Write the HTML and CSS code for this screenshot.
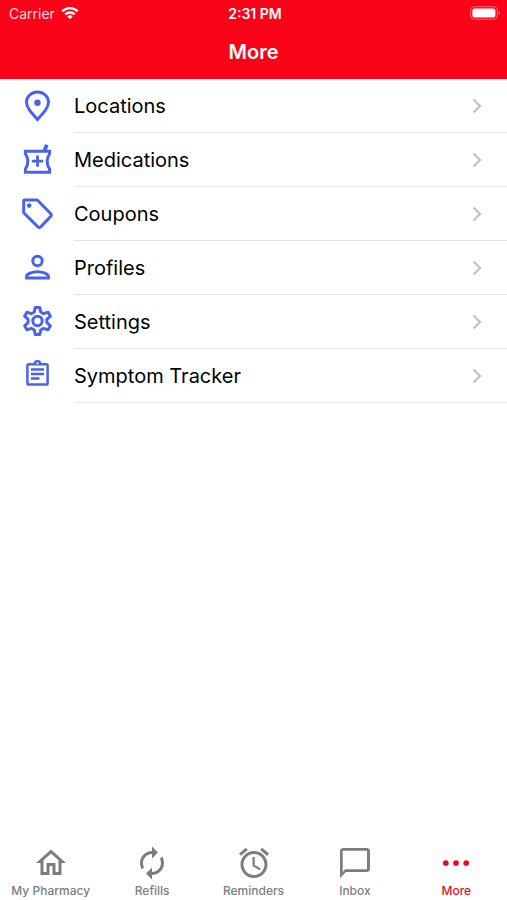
FILE: index.html
```html
<!DOCTYPE html>
<html lang="en">

<head>
    <title>More</title>
    <meta charset="utf-8">
    <meta name="viewport" content="width=device-width, initial-scale=1">
    <link rel="stylesheet" href="styles.css">
</head>

<body>
    <header class="header">
        <div class="status-bar">
            <div class="carrier">
                <span>Carrier</span>
                <svg width="18" height="14" viewBox="0 0 20 14" fill="none" stroke="currentColor" stroke-width="2.6">
                    <path d="M1.4 5.2a12 12 0 0 1 17.2 0M4.7 8.6a7.6 7.6 0 0 1 10.6 0"/>
                    <path d="M10 14l-3-3a4.3 4.3 0 0 1 6 0z" fill="currentColor" stroke="none"/>
                </svg>
            </div>
            <div class="time">2:31 PM</div>
            <div class="battery">
                <svg width="31" height="14" viewBox="0 0 31 14">
                    <rect x="0.7" y="0.7" width="26.6" height="12.6" rx="3.6" fill="none" stroke="#fff" stroke-opacity="0.4"/>
                    <rect x="2.4" y="2.4" width="23" height="9.2" rx="2" fill="#fff"/>
                    <path d="M28.7 4.8c1.8.7 1.8 3.7 0 4.4z" fill="#fff" fill-opacity="0.5"/>
                </svg>
            </div>
        </div>
        <h1 class="title">More</h1>
    </header>

    <main class="content">
        <ul class="menu">
            <li>
                <a class="menu-item" href="#locations">
                    <svg class="menu-icon" viewBox="0 0 36 36">
                        <path d="M18.5 31.5C12 24.5 7.5 19.5 7.5 14.3a11 10.3 0 0 1 22 0c0 5.200-4.500 10.200-11 17.200z" fill="none" stroke="currentColor" stroke-width="3"/>
                        <circle cx="18.5" cy="14.8" r="3.2" fill="currentColor"/>
                    </svg>
                    <span class="menu-label">Locations
                        <svg class="chevron" viewBox="0 0 10 16"><path d="M1.500 1.500L8 8l-6.500 6.500"/></svg>
                    </span>
                </a>
            </li>
            <li>
                <a class="menu-item" href="#medications">
                    <svg class="menu-icon" viewBox="0 0 36 36" fill="none" stroke="currentColor" stroke-width="3">
                        <path d="M6.400 9.200h24.200v2.600q-5 7.600 0 15.200v3.200H6.400V27q5-7.600 0-15.200z"/>
                        <path d="M18.500 13.400v11.400M12.800 19.100h11.400" stroke-width="2.800"/>
                        <path d="M25.400 9l2.400-6.200" stroke-width="3.800"/>
                    </svg>
                    <span class="menu-label">Medications
                        <svg class="chevron" viewBox="0 0 10 16"><path d="M1.500 1.500L8 8l-6.500 6.500"/></svg>
                    </span>
                </a>
            </li>
            <li>
                <a class="menu-item" href="#coupons">
                    <svg class="menu-icon" viewBox="0 0 36 36">
                        <path d="M6 4h12.300L31.600 17.500q1.300 1.500 0 3L21.700 30.900q-1.400 1.300-2.800 0L4.700 16.800V5.300Q4.700 4 6 4z" fill="none" stroke="currentColor" stroke-width="3" stroke-linejoin="round"/>
                        <circle cx="10.200" cy="9.600" r="2.300" fill="currentColor"/>
                    </svg>
                    <span class="menu-label">Coupons
                        <svg class="chevron" viewBox="0 0 10 16"><path d="M1.500 1.500L8 8l-6.500 6.500"/></svg>
                    </span>
                </a>
            </li>
            <li>
                <a class="menu-item" href="#profiles">
                    <svg class="menu-icon" viewBox="0 0 36 36" fill="none" stroke="currentColor" stroke-width="3">
                        <circle cx="18.500" cy="11" r="4.700"/>
                        <path d="M7.600 28.100v-1.500c0-2.600 5.600-4.800 10.900-4.800s10.900 2.200 10.900 4.800v1.500z"/>
                    </svg>
                    <span class="menu-label">Profiles
                        <svg class="chevron" viewBox="0 0 10 16"><path d="M1.500 1.500L8 8l-6.500 6.500"/></svg>
                    </span>
                </a>
            </li>
            <li>
                <a class="menu-item" href="#settings">
                    <svg class="menu-icon" viewBox="0 0 36 36" fill="none" stroke="currentColor" stroke-width="3" stroke-linejoin="round">
                        <path d="M16.200 3.500h4.600l.9 4.500 3 1.700 4.400-1.500 2.300 4-3.500 3.100v3.400l3.500 3.100-2.300 4-4.400-1.500-3 1.700-.9 4.500h-4.600l-.9-4.500-3-1.700-4.400 1.500-2.300-4 3.500-3.100v-3.400l-3.500-3.100 2.300-4 4.400 1.500 3-1.700z"/>
                        <circle cx="18.500" cy="17" r="4.700"/>
                    </svg>
                    <span class="menu-label">Settings
                        <svg class="chevron" viewBox="0 0 10 16"><path d="M1.500 1.500L8 8l-6.500 6.500"/></svg>
                    </span>
                </a>
            </li>
            <li>
                <a class="menu-item" href="#symptom-tracker">
                    <svg class="menu-icon" viewBox="0 0 36 36" fill="none" stroke="currentColor" stroke-width="2.500">
                        <rect x="8.400" y="6.200" width="20.200" height="20.400" rx="1.400"/>
                        <path d="M12 11.400h13M12 16h13M12 20.600h8.500"/>
                        <path d="M14.600 5.800a3.900 3.900 0 0 1 7.800 0z" fill="currentColor" stroke="none"/>
                        <circle cx="18.500" cy="5.300" r="1.100" fill="#fff" stroke="none"/>
                    </svg>
                    <span class="menu-label">Symptom Tracker
                        <svg class="chevron" viewBox="0 0 10 16"><path d="M1.500 1.500L8 8l-6.500 6.500"/></svg>
                    </span>
                </a>
            </li>
        </ul>
    </main>

    <nav class="tab-bar">
        <a class="tab" href="#pharmacy">
            <svg class="tab-icon" viewBox="0 0 24 24"><path d="M12 5.690l5 4.500V18h-2v-6H9v6H7v-7.810l5-4.500M12 3L2 12h3v8h6v-6h2v6h6v-8h3L12 3z"/></svg>
            <span>My Pharmacy</span>
        </a>
        <a class="tab" href="#refills">
            <svg class="tab-icon" viewBox="0 0 24 24"><path d="M12 6v3l4-4-4-4v3c-4.420 0-8 3.580-8 8 0 1.570.46 3.030 1.240 4.260L6.700 14.800c-.45-.83-.7-1.790-.7-2.800 0-3.310 2.690-6 6-6zm6.760 1.740L17.300 9.200c.44.84.7 1.790.7 2.800 0 3.310-2.690 6-6 6v-3l-4 4 4 4v-3c4.420 0 8-3.580 8-8 0-1.570-.46-3.030-1.240-4.260z"/></svg>
            <span>Refills</span>
        </a>
        <a class="tab" href="#reminders">
            <svg class="tab-icon" viewBox="0 0 24 24"><path d="M22 5.720l-4.600-3.860-1.290 1.530 4.600 3.860L22 5.720zM7.880 3.390L6.600 1.860 2 5.710l1.290 1.530 4.590-3.850zM12.500 8H11v6l4.750 2.850.75-1.230-4-2.370V8zM12 4c-4.970 0-9 4.030-9 9s4.020 9 9 9c4.970 0 9-4.030 9-9s-4.030-9-9-9zm0 16c-3.870 0-7-3.130-7-7s3.130-7 7-7 7 3.130 7 7-3.130 7-7 7z"/></svg>
            <span>Reminders</span>
        </a>
        <a class="tab" href="#inbox">
            <svg class="tab-icon" viewBox="0 0 24 24"><path d="M20 2H4c-1.100 0-2 .9-2 2v18l4-4h14c1.100 0 2-.9 2-2V4c0-1.100-.9-2-2-2zm0 14.200H5.400L3.800 18V3.800H20v12.400z"/></svg>
            <span>Inbox</span>
        </a>
        <a class="tab active" href="#more" aria-current="page">
            <svg class="tab-icon" viewBox="0 0 24 24"><circle cx="5.200" cy="12" r="1.900"/><circle cx="12" cy="12" r="1.900"/><circle cx="18.800" cy="12" r="1.900"/></svg>
            <span>More</span>
        </a>
    </nav>
</body>

</html>
```
FILE: styles.css
```css
body {
    font-family: Inter, "Liberation Sans", sans-serif;
    background-color: #fff;
    color: #000;
    margin: 0;
    min-height: 100vh;
    display: flex;
    flex-direction: column;
}

a {
    color: inherit;
    text-decoration: none;
}

.header {
    background-color: #fa0217;
    color: #fff;
}

.status-bar {
    display: grid;
    grid-template-columns: 1fr auto 1fr;
    align-items: center;
    height: 26px;
    padding: 0 6px 0 9px;
    font-size: 14px;
}

.carrier {
    display: flex;
    align-items: center;
    gap: 6px;
    color: #ffdfe2;
}

.carrier svg {
    color: #fff;
}

.time {
    font-weight: 600;
}

.battery {
    display: flex;
    justify-content: flex-end;
}

.title {
    margin: 0;
    height: 53px;
    line-height: 53px;
    font-size: 20px;
    font-weight: 600;
    text-align: center;
}

.content {
    flex: 1;
}

.menu {
    list-style: none;
    margin: 0;
    padding: 0;
}

.menu-item {
    display: flex;
    align-items: center;
    gap: 19px;
    padding-left: 19px;
}

.menu-icon {
    width: 36px;
    height: 36px;
    flex: none;
    color: #4a62ec;
}

.menu-label {
    flex: 1;
    display: flex;
    align-items: center;
    justify-content: space-between;
    height: 53px;
    padding-right: 25px;
    border-bottom: 1px solid #e4e4e6;
    font-size: 20px;
}

.chevron {
    width: 10px;
    height: 16px;
    fill: none;
    stroke: #c4c4c7;
    stroke-width: 2.4;
}

.tab-bar {
    display: flex;
    padding-bottom: 1px;
}

.tab {
    flex: 1;
    display: flex;
    flex-direction: column;
    align-items: center;
    color: #7d7d7d;
    font-size: 12px;
    font-weight: 500;
    line-height: 16px;
    gap: 2px;
    white-space: nowrap;
}

.tab-icon {
    width: 36px;
    height: 36px;
    fill: currentColor;
}

.tab.active {
    color: #ee0a1c;
}
```
